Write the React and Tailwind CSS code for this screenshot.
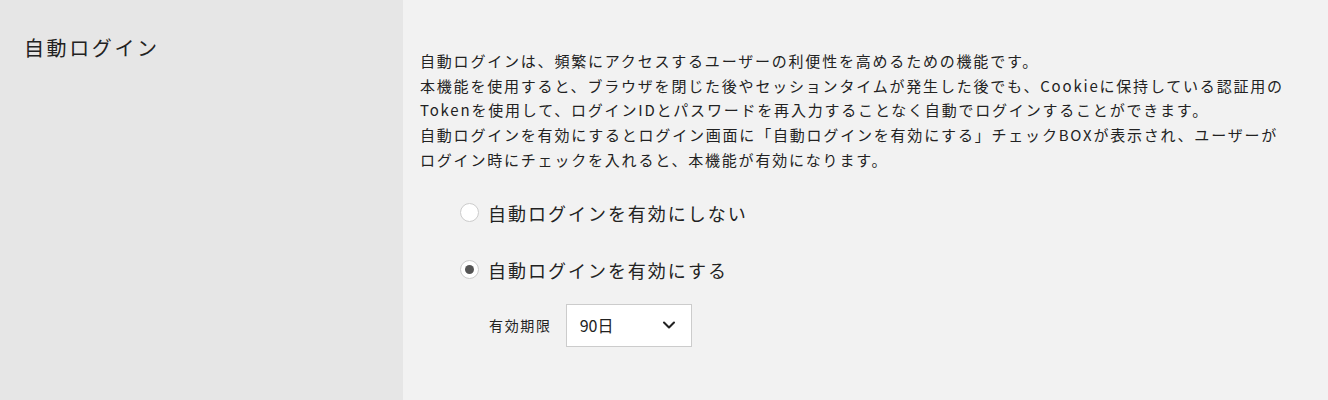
import { ChevronDown } from 'lucide-react'

const FONT = { fontFamily: '"Noto Sans CJK JP", "Noto Sans", sans-serif' }

const Radio = ({ checked, label }) => (
  <label className="flex items-center gap-[9px] text-[18px] tracking-[0.11em] text-[#222] leading-[26px]">
    <span className="w-[19px] h-[19px] rounded-full bg-white border border-[#ccc] flex items-center justify-center">
      {checked && <span className="w-[9px] h-[9px] rounded-full bg-[#555]" />}
    </span>
    {label}
  </label>
)

export default function App() {
  return (
    <div className="flex h-[400px] w-full" style={FONT}>
      {/* 見出し */}
      <div className="w-[403px] shrink-0 bg-[#e6e6e6] pl-6 pt-[33px]">
        <h2 className="text-[20px] tracking-[0.13em] leading-[30px] text-[#222]">自動ログイン</h2>
      </div>

      {/* 設定内容 */}
      <div className="flex-1 bg-[#f2f2f2] pl-[17px] pt-[49px]">
        <p className="text-[15px] tracking-[0.12em] leading-[24.7px] text-[#222]">
          自動ログインは、頻繁にアクセスするユーザーの利便性を高めるための機能です。<br />
          本機能を使用すると、ブラウザを閉じた後やセッションタイムが発生した後でも、Cookieに保持している認証用の<br />
          Tokenを使用して、ログインIDとパスワードを再入力することなく自動でログインすることができます。<br />
          自動ログインを有効にするとログイン画面に「自動ログインを有効にする」チェックBOXが表示され、ユーザーが<br />
          ログイン時にチェックを入れると、本機能が有効になります。
        </p>

        <div className="pl-[40px] mt-[27px] flex flex-col gap-[31px]">
          <Radio label="自動ログインを有効にしない" />
          <Radio checked label="自動ログインを有効にする" />
        </div>

        <div className="flex items-center gap-[14px] pl-[69px] mt-[21px]">
          <span className="text-[14px] tracking-[0.12em] text-[#222]">有効期限</span>
          <div className="w-[126px] h-[43px] bg-white border border-[#ccc] flex items-center justify-between pl-[13px] pr-[12px]">
            <span className="text-[16px] text-[#222]">90日</span>
            <ChevronDown className="w-[20px] h-[20px] text-[#222]" strokeWidth={2.5} />
          </div>
        </div>
      </div>
    </div>
  )
}
